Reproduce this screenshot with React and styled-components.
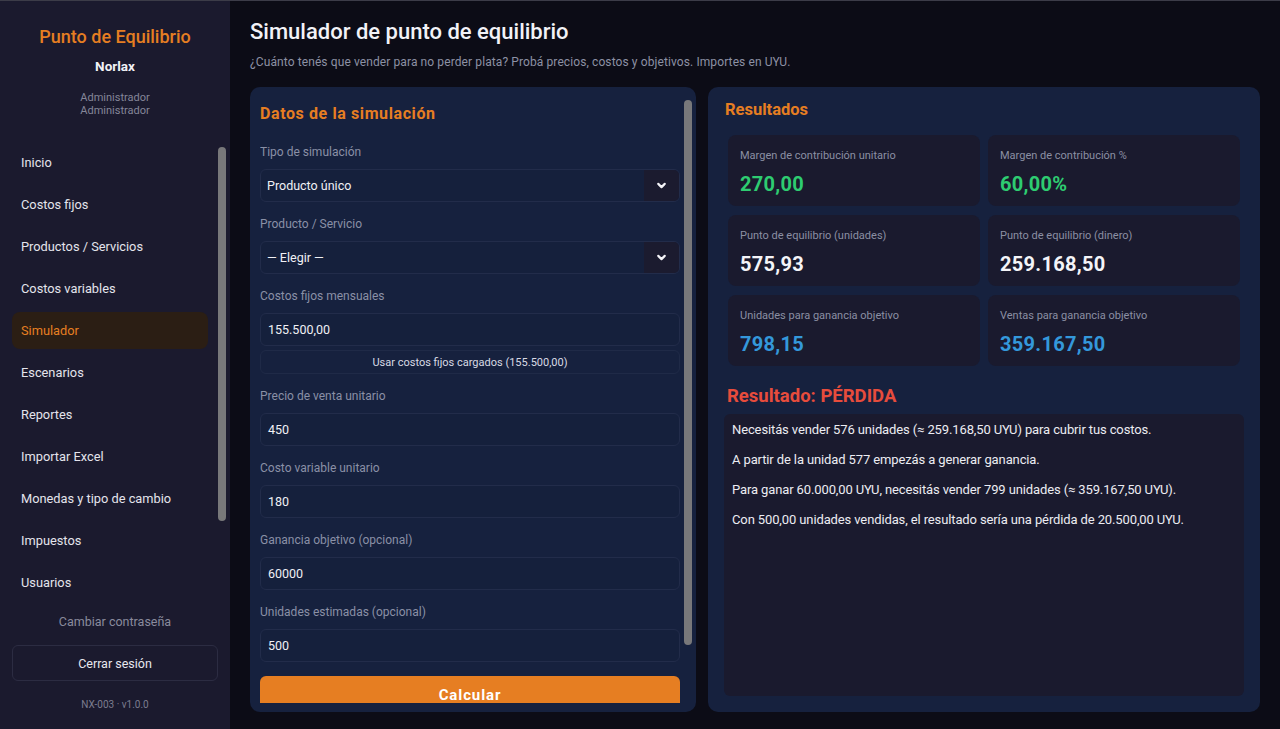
import React from "react";
import styled, { createGlobalStyle } from "styled-components";
import { ChevronDown } from "lucide-react";

const Global = createGlobalStyle`
  html, body { margin: 0; padding: 0; background: #0c0c16; }
  body { font-family: Roboto, "Noto Sans", "Liberation Sans", sans-serif; -webkit-font-smoothing: antialiased; }
  * { box-sizing: border-box; }
`;

const Shell = styled.div`
  display: flex;
  height: 100vh;
  overflow: hidden;
  border-top: 1px solid #3c3c48;
  background: #0c0c16;
`;

const hiddenScroll = `
  scrollbar-width: none;
  &::-webkit-scrollbar { display: none; }
`;

/* decorative scrollbar thumb drawn over the edge of a scroll area */
const ScrollThumb = styled.div`
  position: absolute;
  left: ${(p) => p.$left}px;
  top: ${(p) => p.$top}px;
  width: 8px;
  height: ${(p) => p.$height}px;
  border-radius: 4px;
  background: #78787a;
`;

const Sidebar = styled.aside`
  position: relative;
  width: 230px;
  flex-shrink: 0;
  background: #1b1a2e;
  display: flex;
  flex-direction: column;
  min-height: 0;
`;

const Brand = styled.div`
  padding: 25px 12px 0;
  text-align: center;
`;

const BrandTitle = styled.div`
  font-size: 18px;
  font-weight: 500;
  line-height: 22px;
  color: #e67e22;
`;

const Company = styled.div`
  margin-top: 10px;
  font-size: 13.5px;
  font-weight: 700;
  line-height: 16px;
  color: #f2f2f6;
`;

const Role = styled.div`
  margin-top: 17px;
  font-size: 11px;
  line-height: 13px;
  color: #858699;
`;

const Nav = styled.nav`
  margin-top: 27px;
  margin-right: 12px;
  flex: 1;
  min-height: 0;
  overflow-y: auto;
  padding-bottom: 110px;
  ${hiddenScroll}
`;

const NavItem = styled.div`
  height: 37px;
  margin: 0 10px 5px 12px;
  padding: 0 9px;
  display: flex;
  align-items: center;
  border-radius: 8px;
  font-size: 12.8px;
  color: ${(p) => (p.$active ? "#e67e22" : "#e4e4ec")};
  background: ${(p) => (p.$active ? "#2b1e14" : "transparent")};
`;

const SideFooter = styled.div`
  padding: 8px 12px 17px;
  display: flex;
  flex-direction: column;
  align-items: stretch;
  text-align: center;
`;

const LinkText = styled.div`
  font-size: 12.5px;
  line-height: 20px;
  color: #8a8b9d;
  margin-bottom: 13px;
`;

const LogoutButton = styled.button`
  height: 36px;
  background: transparent;
  border: 1px solid #2c2c42;
  border-radius: 6px;
  color: #e8e8ee;
  font-family: inherit;
  font-size: 12.5px;
`;

const Version = styled.div`
  margin-top: 17px;
  font-size: 10px;
  line-height: 14px;
  color: #7c7d8f;
`;

const Main = styled.main`
  flex: 1;
  min-width: 0;
  padding: 17px 20px 17px;
  display: flex;
  flex-direction: column;
`;

const Title = styled.h1`
  margin: 0;
  font-size: 22px;
  font-weight: 500;
  line-height: 28px;
  color: #f2f2f7;
`;

const Subtitle = styled.p`
  margin: 8px 0 17px;
  font-size: 12px;
  line-height: 16px;
  letter-spacing: 0.1px;
  color: #8c91a4;
`;

const Columns = styled.div`
  flex: 1;
  min-height: 0;
  display: grid;
  grid-template-columns: 446px 1fr;
  gap: 12px;
`;

const FormPanel = styled.section`
  position: relative;
  background: #16213e;
  border-radius: 10px;
  padding: 10px 4px 9px 10px;
  display: flex;
  min-height: 0;
`;

const FormScroll = styled.div`
  flex: 1;
  overflow-y: auto;
  padding-right: 12px;
  padding-bottom: 58px;
  ${hiddenScroll}
`;

const FormHeading = styled.h2`
  margin: 7px 0 20px;
  font-size: 16px;
  font-weight: 700;
  line-height: 20px;
  letter-spacing: 0.6px;
  color: #e67e22;
`;

const Field = styled.div`
  display: flex;
  flex-direction: column;
  gap: 9px;
  margin-bottom: 14px;
`;

const Stack = styled.div`
  display: flex;
  flex-direction: column;
  gap: 4px;
`;

const Label = styled.label`
  font-size: 12px;
  line-height: 16px;
  color: #8a90a6;
`;

const Input = styled.div`
  height: 33px;
  display: flex;
  align-items: center;
  padding: 0 7px;
  background: #15203c;
  border: 1px solid #222c4a;
  border-radius: 6px;
  font-size: 12.5px;
  color: #f0f0f5;
`;

const SelectBox = styled.div`
  height: 33px;
  display: flex;
  align-items: stretch;
  background: #15203c;
  border: 1px solid #222c4a;
  border-radius: 6px;
  overflow: hidden;
`;

const SelectValue = styled.div`
  flex: 1;
  display: flex;
  align-items: center;
  padding: 0 6px;
  font-size: 12.5px;
  color: #f0f0f5;
`;

const SelectArrow = styled.div`
  width: 35px;
  display: flex;
  align-items: center;
  justify-content: center;
  background: #1b1b2f;
  color: #f4f4f8;
`;

const GhostButton = styled.button`
  height: 24px;
  width: 100%;
  background: transparent;
  border: 1px solid #1f2a47;
  border-radius: 6px;
  color: #d8dae4;
  font-family: inherit;
  font-size: 11px;
`;

const PrimaryButton = styled.button`
  height: 38px;
  width: 100%;
  background: #e67e22;
  border: none;
  border-radius: 6px;
  color: #ffffff;
  font-family: inherit;
  font-size: 15px;
  font-weight: 700;
  letter-spacing: 0.9px;
`;

const ResultsPanel = styled.section`
  background: #16213e;
  border-radius: 10px;
  padding: 13px 17px 16px;
  display: flex;
  flex-direction: column;
  min-height: 0;
`;

const ResultsTitle = styled.h2`
  margin: 0 0 15px;
  font-size: 16.5px;
  font-weight: 700;
  line-height: 20px;
  color: #e67e22;
`;

const MetricGrid = styled.div`
  display: grid;
  grid-template-columns: 1fr 1fr;
  gap: 9px 8px;
  padding: 0 3px;
`;

const Card = styled.div`
  background: #1a1a2e;
  border-radius: 8px;
  padding: 14px 12px 10px;
`;

const CardLabel = styled.div`
  font-size: 11px;
  line-height: 14px;
  color: #8b8fa3;
`;

const CardValue = styled.div`
  margin-top: 9px;
  font-size: 20px;
  font-weight: 700;
  line-height: 24px;
  letter-spacing: 0.3px;
  color: ${(p) => p.$color};
`;

const Verdict = styled.h3`
  margin: 20px 0 8px 2px;
  font-size: 18.5px;
  font-weight: 700;
  line-height: 20px;
  color: #e74c3c;
`;

const MessageBox = styled.div`
  flex: 1;
  margin: 0 -1px;
  background: #1a1a2e;
  border-radius: 6px;
  padding: 8px;
`;

const Message = styled.p`
  margin: 0 0 14px;
  font-size: 13px;
  line-height: 16px;
  letter-spacing: -0.12px;
  color: #ececf2;
`;

const navItems = [
  "Inicio",
  "Costos fijos",
  "Productos / Servicios",
  "Costos variables",
  "Simulador",
  "Escenarios",
  "Reportes",
  "Importar Excel",
  "Monedas y tipo de cambio",
  "Impuestos",
  "Usuarios",
];

const metrics = [
  { label: "Margen de contribución unitario", value: "270,00", color: "#2ecc71" },
  { label: "Margen de contribución %", value: "60,00%", color: "#2ecc71" },
  { label: "Punto de equilibrio (unidades)", value: "575,93", color: "#f4f4f8" },
  { label: "Punto de equilibrio (dinero)", value: "259.168,50", color: "#f4f4f8" },
  { label: "Unidades para ganancia objetivo", value: "798,15", color: "#3498db" },
  { label: "Ventas para ganancia objetivo", value: "359.167,50", color: "#3498db" },
];

const messages = [
  "Necesitás vender 576 unidades (≈ 259.168,50 UYU) para cubrir tus costos.",
  "A partir de la unidad 577 empezás a generar ganancia.",
  "Para ganar 60.000,00 UYU, necesitás vender 799 unidades (≈ 359.167,50 UYU).",
  "Con 500,00 unidades vendidas, el resultado sería una pérdida de 20.500,00 UYU.",
];

function Select({ value }) {
  return (
    <SelectBox>
      <SelectValue>{value}</SelectValue>
      <SelectArrow>
        <ChevronDown size={13} strokeWidth={4} />
      </SelectArrow>
    </SelectBox>
  );
}

export default function App() {
  return (
    <>
      <Global />
      <Shell>
        <Sidebar>
          <Brand>
            <BrandTitle>Punto de Equilibrio</BrandTitle>
            <Company>Norlax</Company>
            <Role>
              Administrador
              <br />
              Administrador
            </Role>
          </Brand>
          <Nav>
            {navItems.map((item) => (
              <NavItem key={item} $active={item === "Simulador"}>
                {item}
              </NavItem>
            ))}
          </Nav>
          <SideFooter>
            <LinkText>Cambiar contraseña</LinkText>
            <LogoutButton>Cerrar sesión</LogoutButton>
            <Version>NX-003 · v1.0.0</Version>
          </SideFooter>
          <ScrollThumb $left={218} $top={146} $height={374} />
        </Sidebar>
        <Main>
          <Title>Simulador de punto de equilibrio</Title>
          <Subtitle>
            ¿Cuánto tenés que vender para no perder plata? Probá precios, costos y objetivos. Importes en UYU.
          </Subtitle>
          <Columns>
            <FormPanel>
              <FormScroll>
                <FormHeading>Datos de la simulación</FormHeading>
                <Field>
                  <Label>Tipo de simulación</Label>
                  <Select value="Producto único" />
                </Field>
                <Field>
                  <Label>Producto / Servicio</Label>
                  <Select value="— Elegir —" />
                </Field>
                <Field>
                  <Label>Costos fijos mensuales</Label>
                  <Stack>
                    <Input>155.500,00</Input>
                    <GhostButton>Usar costos fijos cargados (155.500,00)</GhostButton>
                  </Stack>
                </Field>
                <Field>
                  <Label>Precio de venta unitario</Label>
                  <Input>450</Input>
                </Field>
                <Field>
                  <Label>Costo variable unitario</Label>
                  <Input>180</Input>
                </Field>
                <Field>
                  <Label>Ganancia objetivo (opcional)</Label>
                  <Input>60000</Input>
                </Field>
                <Field>
                  <Label>Unidades estimadas (opcional)</Label>
                  <Input>500</Input>
                </Field>
                <PrimaryButton>Calcular</PrimaryButton>
              </FormScroll>
              <ScrollThumb $left={434} $top={13} $height={545} />
            </FormPanel>
            <ResultsPanel>
              <ResultsTitle>Resultados</ResultsTitle>
              <MetricGrid>
                {metrics.map((m) => (
                  <Card key={m.label}>
                    <CardLabel>{m.label}</CardLabel>
                    <CardValue $color={m.color}>{m.value}</CardValue>
                  </Card>
                ))}
              </MetricGrid>
              <Verdict>Resultado: PÉRDIDA</Verdict>
              <MessageBox>
                {messages.map((t) => (
                  <Message key={t}>{t}</Message>
                ))}
              </MessageBox>
            </ResultsPanel>
          </Columns>
        </Main>
      </Shell>
    </>
  );
}
